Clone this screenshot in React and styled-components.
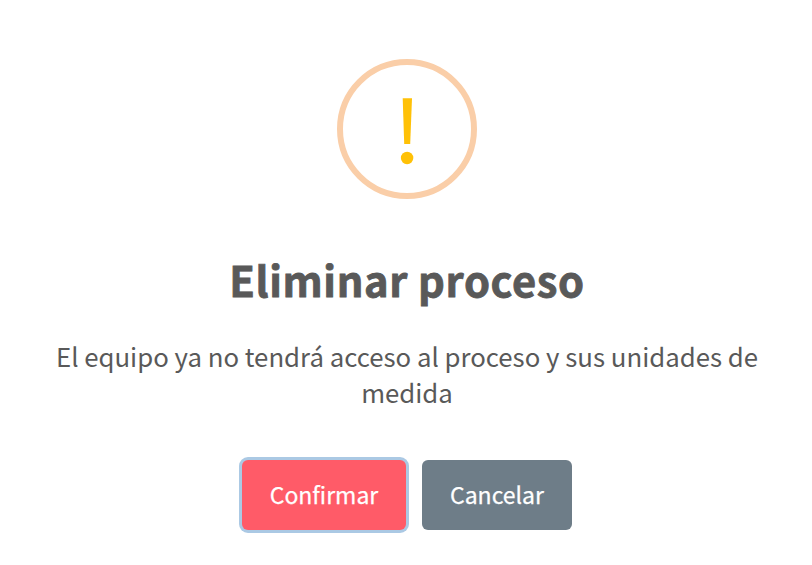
import React from "react";
import styled, { createGlobalStyle } from "styled-components";

const GlobalStyle = createGlobalStyle`
  * { box-sizing: border-box; }
  body {
    margin: 0;
    background: #fff;
    font-family: "Source Sans Pro", "Noto Sans CJK SC", sans-serif;
  }
`;

const Dialog = styled.main`
  display: flex;
  flex-direction: column;
  align-items: center;
  width: 812px;
  height: 565px;
  padding: 59px 40px 0 42px;
  overflow: hidden;
  background: #fff;
`;

const WarningIcon = styled.div`
  display: flex;
  justify-content: center;
  align-items: center;
  flex: none;
  width: 140px;
  height: 140px;
  border: 6px solid #facea8;
  border-radius: 50%;
`;

const Title = styled.h1`
  margin: 48px 0 0;
  color: #595959;
  font-size: 41.7px;
  font-weight: 700;
  letter-spacing: 0.62px;
  line-height: 64px;
  -webkit-text-stroke: 0.8px #595959;
`;

const Message = styled.p`
  margin: 27px 0 0;
  color: #595959;
  font-size: 25.78px;
  line-height: 36px;
  text-align: center;
`;

const Actions = styled.div`
  display: flex;
  gap: 16px;
  margin-top: 50px;
`;

const Button = styled.button`
  width: ${(p) => p.$width}px;
  height: 70px;
  padding: 0 0 2px;
  border: 0;
  border-radius: 6px;
  outline: none;
  background: ${(p) => p.$color};
  box-shadow: ${(p) => (p.$focused ? "0 0 0 3px #abc9e4" : "none")};
  color: #fff;
  font-family: inherit;
  font-size: 23px;
  font-weight: 400;
  -webkit-text-stroke: 0.25px #fff;
`;

export default function App() {
  return (
    <>
      <GlobalStyle />
      <Dialog role="dialog">
        <WarningIcon>
          <svg width="128" height="128" viewBox="0 0 128 128" fill="#ffc107">
            <path d="M59.7 33.2H69L67.2 79H61.2Z" />
            <circle cx="64.1" cy="93" r="6.2" />
          </svg>
        </WarningIcon>
        <Title>Eliminar proceso</Title>
        <Message>
          El equipo ya no tendrá acceso al proceso y sus unidades de medida
        </Message>
        <Actions>
          <Button $width={164} $color="#ff5b68" $focused>Confirmar</Button>
          <Button $width={150} $color="#6e7d88">Cancelar</Button>
        </Actions>
      </Dialog>
    </>
  );
}
